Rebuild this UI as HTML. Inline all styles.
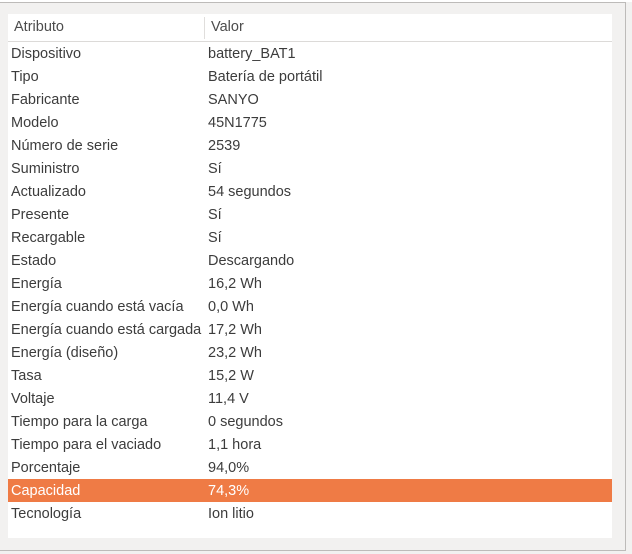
<!DOCTYPE html>
<html><head><meta charset="utf-8"><style>
body{margin:0;width:632px;height:554px;background:#f2f1f0;position:relative;overflow:hidden;font-family:"Liberation Sans","DejaVu Sans",sans-serif;font-size:14.5px;color:#3c3c3c}
.top{position:absolute;left:0;top:0;width:632px;height:2px;background:#fff}
.frame{position:absolute;left:0;top:2px;width:625px;height:547px;border-top:1px solid #bdbbb9;border-right:1px solid #bdbbb9;border-bottom:1px solid #bdbbb9;background:#f2f1f0}
.panel{position:absolute;left:8px;top:14px;width:604px;height:524px;background:#fff}
.hdr{position:absolute;left:0;top:0;width:604px;height:27px;border-bottom:1px solid #dcdad8}
.hdr span{position:absolute;top:5px;color:#4c4c4c}
.div{position:absolute;left:196px;top:3px;width:1px;height:22px;background:#e0dedc}
.row{position:absolute;left:0;width:604px;height:23px;line-height:25px}
.row span{position:absolute;top:0}
.a{left:3px}.b{left:200px}
.sel{background:#ef7b45;color:#fff}
</style></head><body>
<div class="top"></div>
<div class="frame"></div>
<div class="panel">
<div class="hdr"><span style="left:6px">Atributo</span><div class="div"></div><span style="left:203px">Valor</span></div>
<div class="row" style="top:28px"><span class="a">Dispositivo</span><span class="b">battery_BAT1</span></div>
<div class="row" style="top:51px"><span class="a">Tipo</span><span class="b">Batería de portátil</span></div>
<div class="row" style="top:74px"><span class="a">Fabricante</span><span class="b">SANYO</span></div>
<div class="row" style="top:97px"><span class="a">Modelo</span><span class="b">45N1775</span></div>
<div class="row" style="top:120px"><span class="a">Número de serie</span><span class="b">2539</span></div>
<div class="row" style="top:143px"><span class="a">Suministro</span><span class="b">Sí</span></div>
<div class="row" style="top:166px"><span class="a">Actualizado</span><span class="b">54 segundos</span></div>
<div class="row" style="top:189px"><span class="a">Presente</span><span class="b">Sí</span></div>
<div class="row" style="top:212px"><span class="a">Recargable</span><span class="b">Sí</span></div>
<div class="row" style="top:235px"><span class="a">Estado</span><span class="b">Descargando</span></div>
<div class="row" style="top:258px"><span class="a">Energía</span><span class="b">16,2 Wh</span></div>
<div class="row" style="top:281px"><span class="a">Energía cuando está vacía</span><span class="b">0,0 Wh</span></div>
<div class="row" style="top:304px"><span class="a">Energía cuando está cargada</span><span class="b">17,2 Wh</span></div>
<div class="row" style="top:327px"><span class="a">Energía (diseño)</span><span class="b">23,2 Wh</span></div>
<div class="row" style="top:350px"><span class="a">Tasa</span><span class="b">15,2 W</span></div>
<div class="row" style="top:373px"><span class="a">Voltaje</span><span class="b">11,4 V</span></div>
<div class="row" style="top:396px"><span class="a">Tiempo para la carga</span><span class="b">0 segundos</span></div>
<div class="row" style="top:419px"><span class="a">Tiempo para el vaciado</span><span class="b">1,1 hora</span></div>
<div class="row" style="top:442px"><span class="a">Porcentaje</span><span class="b">94,0%</span></div>
<div class="row sel" style="top:465px"><span class="a">Capacidad</span><span class="b">74,3%</span></div>
<div class="row" style="top:488px"><span class="a">Tecnología</span><span class="b">Ion litio</span></div>
</div>
</body></html>
